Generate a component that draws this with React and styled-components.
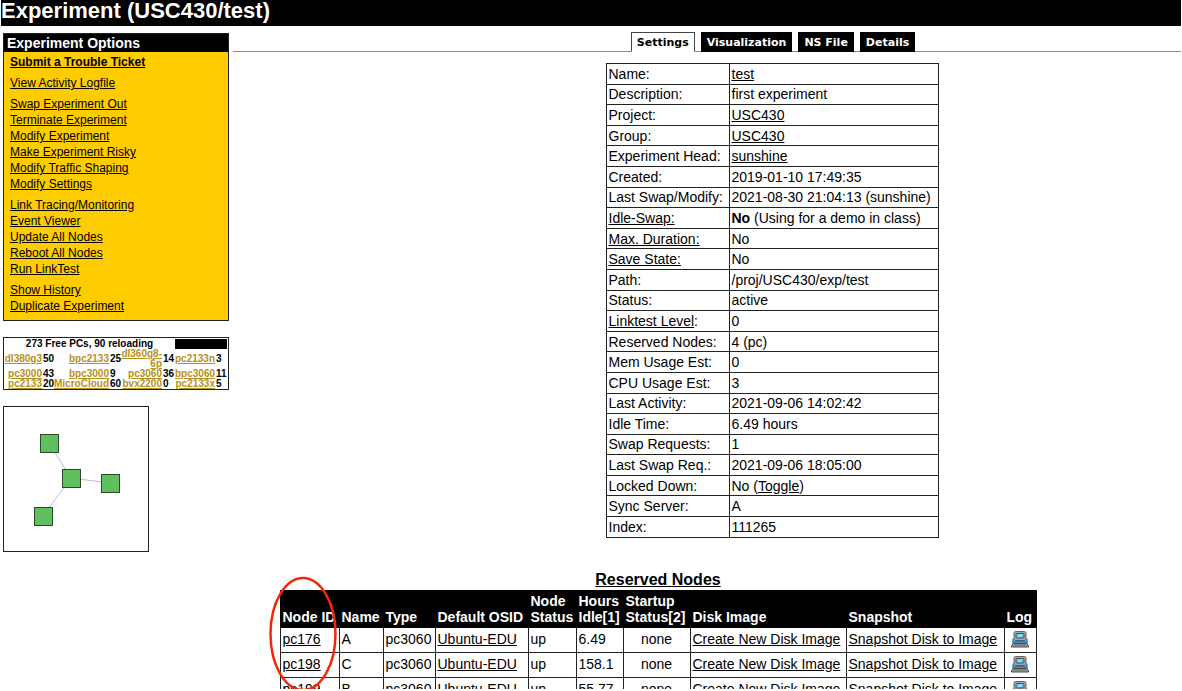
import React from "react";
import styled, { createGlobalStyle } from "styled-components";

const GlobalStyle = createGlobalStyle`
  body {
    margin: 0;
    background: #fff;
    color: #000;
    font-family: "Liberation Sans", Arial, Helvetica, sans-serif;
    font-size: 14px;
    line-height: 16px;
  }
  a { color: inherit; }
`;

const Page = styled.div`
  box-sizing: border-box;
  height: 100vh;
  overflow: hidden;
  border: solid #fff;
  border-width: 0 1px 2px;
`;

const Title = styled.h1`
  margin: 0;
  height: 26px;
  background: #000;
  color: #fff;
  font-size: 22px;
  line-height: 22px;
`;

const Columns = styled.div`
  display: flex;
  align-items: flex-start;
  gap: 4px;
  padding-left: 2px;
`;

const Sidebar = styled.aside`
  flex: none;
  width: 226px;
  padding-top: 7px;
  display: flex;
  flex-direction: column;
  gap: 16px;
`;

const Menu = styled.nav`
  border: 1px solid #222;
  background: #ffcc00;
  font-size: 12px;
`;

const MenuTitle = styled.h2`
  margin: 0;
  padding: 0 3px;
  background: #000;
  color: #fff;
  font-size: 14px;
  line-height: 18px;
`;

const MenuGroups = styled.div`
  display: flex;
  flex-direction: column;
  gap: 5px;
  padding: 2px 6px 6px;
`;

const MenuList = styled.ul`
  list-style: none;
  margin: 0;
  padding: 0;
  font-weight: ${(p) => (p.$strong ? "bold" : "normal")};
`;

const FreePcs = styled.section`
  border: 1px solid #222;
  font-size: 10px;
  line-height: 10px;
  font-weight: bold;
`;

const FreeHeader = styled.div`
  display: flex;
  align-items: center;
  height: 11px;
  span { flex: 1; text-align: center; }
  &::after {
    content: "";
    width: 52px;
    height: 10px;
    margin-right: 1px;
    background: #000;
  }
`;

const FreeTable = styled.table`
  width: 100%;
  border-collapse: collapse;
  table-layout: fixed;
  td { padding: 0; }
  td:nth-child(odd) { text-align: right; }
  td:nth-child(even) { padding-left: 1px; }
  a { color: #b8911a; }
`;

const Topology = styled.svg`
  display: block;
  width: 146px;
  height: 146px;
`;

const Main = styled.main`
  flex: 1;
  min-width: 0;
  padding-top: 6px;
`;

const Tabs = styled.nav`
  display: flex;
  justify-content: center;
  gap: 6px;
  padding-left: 132px;
  border-bottom: 1px solid #888896;
`;

const Tab = styled.a`
  box-sizing: border-box;
  height: 20px;
  margin-bottom: -1px;
  padding: 0 5px;
  border: 1px solid ${(p) => (p.$active ? "#444" : "#000")};
  border-bottom-color: ${(p) => (p.$active ? "#fff" : "#000")};
  background: ${(p) => (p.$active ? "#fff" : "#000")};
  color: ${(p) => (p.$active ? "#000" : "#fff")};
  font: bold 11px/20px "DejaVu Sans", Verdana, sans-serif;
  text-decoration: none;
`;

const Centered = styled.div`
  display: flex;
  flex-direction: column;
  align-items: center;
  padding-top: ${(p) => p.$top}px;
  padding-left: ${(p) => p.$left}px;
`;

const Details = styled.table`
  width: 333px;
  height: 475px;
  table-layout: fixed;
  border-collapse: collapse;
  th, td {
    padding: 0 2px;
    border: 1px solid #222;
    font-weight: normal;
    text-align: left;
    white-space: nowrap;
  }
`;

const NodesTitle = styled.h2`
  margin: 0 0 2px;
  font-size: 16px;
  line-height: 16px;
`;

const NodesWrap = styled.div`
  position: relative;
`;

const Nodes = styled.table`
  width: 756px;
  table-layout: fixed;
  border-collapse: collapse;
  th, td {
    padding: 0 2px;
    text-align: left;
    white-space: nowrap;
  }
  th {
    height: 34px;
    border: 1px solid #000;
    background: #000;
    color: #fff;
    vertical-align: bottom;
    padding-bottom: 2px;
  }
  td {
    height: 22px;
    padding-bottom: 2px;
    border: 1px solid #222;
  }
  td:nth-child(7), td:nth-child(10) { text-align: center; }
  svg { display: block; margin: 0 auto; }
`;

const Marker = styled.svg`
  position: absolute;
  left: -12px;
  top: -14px;
  pointer-events: none;
`;

const menu = [
  ["Submit a Trouble Ticket"],
  ["View Activity Logfile"],
  ["Swap Experiment Out", "Terminate Experiment", "Modify Experiment", "Make Experiment Risky", "Modify Traffic Shaping", "Modify Settings"],
  ["Link Tracing/Monitoring", "Event Viewer", "Update All Nodes", "Reboot All Nodes", "Run LinkTest"],
  ["Show History", "Duplicate Experiment"],
];

const free = [
  [["dl380g3", 50], ["bpc2133", 25], ["dl360g8-6p", 14], ["pc2133n", 3]],
  [["pc3000", 43], ["bpc3000", 9], ["pc3060", 36], ["bpc3060", 11]],
  [["pc2133", 20], ["MicroCloud", 60], ["bvx2200", 0], ["pc2133x", 5]],
];

const Link = ({ children }) => <a href="#">{children}</a>;

const details = [
  ["Name:", <Link>test</Link>],
  ["Description:", "first experiment"],
  ["Project:", <Link>USC430</Link>],
  ["Group:", <Link>USC430</Link>],
  ["Experiment Head:", <Link>sunshine</Link>],
  ["Created:", "2019-01-10 17:49:35"],
  ["Last Swap/Modify:", "2021-08-30 21:04:13 (sunshine)"],
  [<Link>Idle-Swap:</Link>, <><b>No</b> (Using for a demo in class)</>],
  [<Link>Max. Duration:</Link>, "No"],
  [<Link>Save State:</Link>, "No"],
  ["Path:", "/proj/USC430/exp/test"],
  ["Status:", "active"],
  [<><Link>Linktest Level</Link>:</>, "0"],
  ["Reserved Nodes:", "4 (pc)"],
  ["Mem Usage Est:", "0"],
  ["CPU Usage Est:", "3"],
  ["Last Activity:", "2021-09-06 14:02:42"],
  ["Idle Time:", "6.49 hours"],
  ["Swap Requests:", "1"],
  ["Last Swap Req.:", "2021-09-06 18:05:00"],
  ["Locked Down:", <>No (<Link>Toggle</Link>)</>],
  ["Sync Server:", "A"],
  ["Index:", "111265"],
];

const nodeColumns = [
  ["Node ID", 59], ["Name", 44], ["Type", 52], ["Default OSID", 93],
  [<>Node<br />Status</>, 48], [<>Hours<br />Idle[1]</>, 47],
  [<>Startup<br />Status[2]</>, 67], ["Disk Image", 156], ["Snapshot", 158], ["Log", 32],
];

const nodes = [
  ["pc176", "A", "6.49"],
  ["pc198", "C", "158.1"],
  ["pc199", "B", "55.77"],
];

const topologyNodes = [[46, 37], [68, 72], [107, 77], [40, 110]];

function ComputerIcon() {
  return (
    <svg width="18" height="17" viewBox="0 0 18 17" aria-label="Console log" role="img">
      <rect x="3" y=".5" width="12" height="9" rx="1.5" fill="#aaa4a0" stroke="#6b6562" />
      <rect x="5" y="2.5" width="8" height="4.5" rx="1" fill="#54c5f5" stroke="#4a545c" />
      <path d="M6.5 6 L9 3.2 H11.5 L9 6Z" fill="#a5e4fb" />
      <path d="M1.5 7.5 H3.5 V9.5 H14.5 V7.5 H16.5 L17 12.5 H1Z" fill="#2f93d6" />
      <path d="M4.5 9 H13.5 V10.5 H4.5Z" fill="#5c5a5b" />
      <path d="M2 12.5 H16 L17.5 15 V16 H.5 V15Z" fill="#a8a09c" stroke="#4c4746" />
      <path d="M3 14 H15" stroke="#6b6360" />
    </svg>
  );
}

export default function App() {
  return (
    <Page>
      <GlobalStyle />
      <Title>Experiment (USC430/test)</Title>
      <Columns>
        <Sidebar>
          <Menu>
            <MenuTitle>Experiment Options</MenuTitle>
            <MenuGroups>
              {menu.map((group, i) => (
                <MenuList key={i} $strong={i === 0}>
                  {group.map((item) => <li key={item}><Link>{item}</Link></li>)}
                </MenuList>
              ))}
            </MenuGroups>
          </Menu>
          <FreePcs>
            <FreeHeader><span>273 Free PCs, 90 reloading</span></FreeHeader>
            <FreeTable>
              <colgroup>
                {[38, 12, 55, 12, 41, 13, 40, 13].map((w, i) => <col key={i} width={w} />)}
              </colgroup>
              <tbody>
                {free.map((row, i) => (
                  <tr key={i}>
                    {row.map(([name, count]) => (
                      <React.Fragment key={name}>
                        <td><Link>{name}</Link></td>
                        <td>{count}</td>
                      </React.Fragment>
                    ))}
                  </tr>
                ))}
              </tbody>
            </FreeTable>
          </FreePcs>
          <Topology viewBox="0 0 146 146" role="img" aria-label="Experiment topology">
            <rect x=".5" y=".5" width="145" height="145" fill="#fff" stroke="#222" />
            <path d="M46 37 L68 72 L107 77 M68 72 L40 110" fill="none" stroke="#b9b9e2" />
            {topologyNodes.map(([x, y]) => (
              <rect key={x} x={x - 8.5} y={y - 8.5} width="18" height="18" fill="#60c060" stroke="#2b4a2b" />
            ))}
          </Topology>
        </Sidebar>
        <Main>
          <Tabs>
            {["Settings", "Visualization", "NS File", "Details"].map((tab, i) => (
              <Tab key={tab} href="#" $active={i === 0}>{tab}</Tab>
            ))}
          </Tabs>
          <Centered $top={11} $left={130}>
            <Details>
              <colgroup><col width="123" /><col /></colgroup>
              <tbody>
                {details.map(([label, value], i) => (
                  <tr key={i}><th scope="row">{label}</th><td>{value}</td></tr>
                ))}
              </tbody>
            </Details>
          </Centered>
        </Main>
      </Columns>
      <Centered $top={20} $left={134}>
        <NodesTitle><Link>Reserved Nodes</Link></NodesTitle>
        <NodesWrap>
          <Nodes>
            <colgroup>{nodeColumns.map(([, w], i) => <col key={i} width={w} />)}</colgroup>
            <thead>
              <tr>{nodeColumns.map(([label], i) => <th key={i} scope="col">{label}</th>)}</tr>
            </thead>
            <tbody>
              {nodes.map(([id, name, idle]) => (
                <tr key={id}>
                  <td><Link>{id}</Link></td>
                  <td>{name}</td>
                  <td>pc3060</td>
                  <td><Link>Ubuntu-EDU</Link></td>
                  <td>up</td>
                  <td>{idle}</td>
                  <td>none</td>
                  <td><Link>Create New Disk Image</Link></td>
                  <td><Link>Snapshot Disk to Image</Link></td>
                  <td><ComputerIcon /></td>
                </tr>
              ))}
            </tbody>
          </Nodes>
          <Marker width="70" height="116" aria-hidden="true">
            <ellipse cx="35" cy="58" rx="32.5" ry="56" fill="none" stroke="#f5270b" strokeWidth="2.5" />
          </Marker>
        </NodesWrap>
      </Centered>
    </Page>
  );
}
